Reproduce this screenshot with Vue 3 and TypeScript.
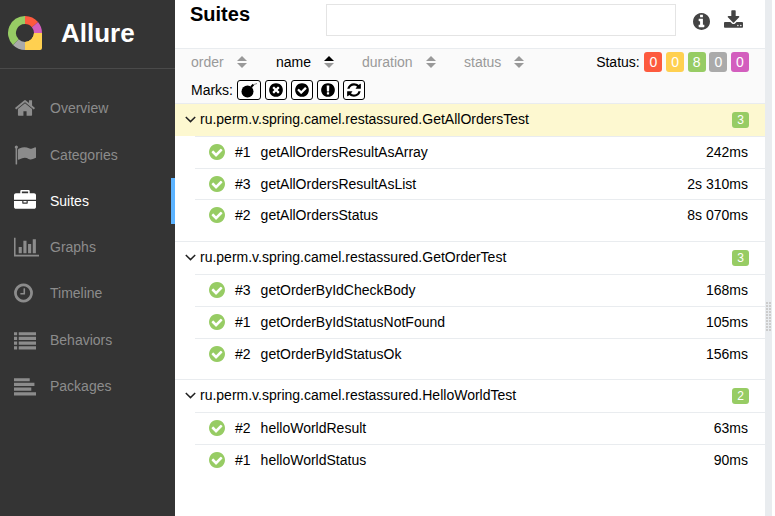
<script setup lang="ts">
interface NavItem {
  label: string
  view: string
  width: number
  d: string
  active?: boolean
}

interface TestRow {
  order: number
  name: string
  time: string
}

interface Group {
  name: string
  count: number
  selected?: boolean
  rows: TestRow[]
}

const check =
  'M1412 734q0-28-18-46l-91-90q-19-19-45-19t-45 19l-408 407-226-226q-19-19-45-19t-45 19l-91 90q-18 18-18 46 0 27 18 45l362 362q19 19 45 19 27 0 46-19l543-543q18-18 18-45zm252 162q0 209-103 385.500t-279.500 279.500-385.500 103-385.500-103-279.500-279.500-103-385.500 103-385.500 279.500-279.500 385.500-103 385.500 103 279.500 279.500 103 385.500z'
const times =
  'M1277 1122q0-26-19-45l-181-181 181-181q19-19 19-45 0-27-19-46l-90-90q-19-19-46-19-26 0-45 19l-181 181-181-181q-19-19-45-19-27 0-46 19l-90 90q-19 19-19 46 0 26 19 45l181 181-181 181q-19 19-19 45 0 27 19 46l90 90q19 19 46 19 26 0 45-19l181-181 181 181q19 19 45 19 27 0 46-19l90-90q19-19 19-46zm387-226q0 209-103 385.500t-279.500 279.500-385.500 103-385.500-103-279.500-279.500-103-385.500 103-385.500 279.500-279.500 385.500-103 385.500 103 279.500 279.500 103 385.500z'
const exclaim =
  'M896 128q209 0 385.500 103t279.500 279.500 103 385.500-103 385.500-279.500 279.500-385.500 103-385.500-103-279.500-279.500-103-385.500 103-385.500 279.500-279.500 385.500-103zm128 1247v-190q0-14-9-23.500t-22-9.500h-192q-13 0-23 10t-10 23v190q0 13 10 23t23 10h192q13 0 22-9.500t9-23.500zm-2-344l18-621q0-12-10-18-10-8-24-8h-220q-14 0-24 8-10 6-10 18l17 621q0 10 10 17.500t24 7.500h185q14 0 23.500-7.500t10.500-17.500z'
const refresh =
  'M1639 1056q0 5-1 7-64 268-268 434.500t-478 166.500q-146 0-282.500-55t-243.500-157l-129 129q-19 19-45 19t-45-19-19-45v-448q0-26 19-45t45-19h448q26 0 45 19t19 45-19 45l-137 137q71 66 161 102t187 36q134 0 250-65t186-179q11-17 53-117 8-23 30-23h192q13 0 22.500 9.500t9.500 22.500zm25-800v448q0 26-19 45t-45 19h-448q-26 0-45-19t-19-45 19-45l138-138q-148-137-349-137-134 0-250 65t-186 179q-11 17-53 117-8 23-30 23h-199q-13 0-22.500-9.500t-9.500-22.500v-7q65-268 270-434.500t480-166.500q146 0 284 55.500t245 156.500l130-129q19-19 45-19t45 19 19 45z'
const info =
  'M1152 1376v-160q0-14-9-23t-23-9h-96v-512q0-14-9-23t-23-9h-320q-14 0-23 9t-9 23v160q0 14 9 23t23 9h96v320h-96q-14 0-23 9t-9 23v160q0 14 9 23t23 9h448q14 0 23-9t9-23zm-128-896v-160q0-14-9-23t-23-9h-192q-14 0-23 9t-9 23v160q0 14 9 23t23 9h192q14 0 23-9t9-23zm640 416q0 209-103 385.500t-279.500 279.500-385.500 103-385.500-103-279.500-279.500-103-385.500 103-385.500 279.500-279.500 385.500-103 385.500 103 279.500 279.500 103 385.500z'
const download =
  'M1344 1344q0-26-19-45t-45-19-45 19-19 45 19 45 45 19 45-19 19-45zm256 0q0-26-19-45t-45-19-45 19-19 45 19 45 45 19 45-19 19-45zm128-224v320q0 40-28 68t-68 28h-1472q-40 0-68-28t-28-68v-320q0-40 28-68t68-28h465l135 136q58 56 136 56t136-56l136-136h464q40 0 68 28t28 68zm-325-569q17 41-14 70l-448 448q-18 19-45 19t-45-19l-448-448q-31-29-14-70 17-39 59-39h256v-448q0-26 19-45t45-19h256q26 0 45 19t19 45v448h256q42 0 59 39z'

const nav: NavItem[] = [
  {
    label: 'Overview',
    view: '0 0 1792 1792',
    width: 22,
    d: 'M1472 992v480q0 26-19 45t-45 19h-384v-384h-256v384h-384q-26 0-45-19t-19-45v-480q0-1 .5-3t.5-3l575-474 575 474q1 2 1 6zm223-69l-62 74q-8 9-21 11h-3q-13 0-21-7l-692-577-692 577q-12 8-24 7-13-2-21-11l-62-74q-8-10-7-23.500t11-21.500l719-599q32-26 76-26t76 26l244 204v-195q0-14 9-23t23-9h192q14 0 23 9t9 23v408l219 182q10 8 11 21.500t-7 23.500z',
  },
  {
    label: 'Categories',
    view: '0 0 1792 1792',
    width: 22,
    d: 'M320 256q0 72-64 110v1266q0 13-9.500 22.500t-22.500 9.500h-64q-13 0-22.500-9.500t-9.500-22.500v-1266q-64-38-64-110 0-53 37.500-90.500t90.500-37.500 90.500 37.500 37.500 90.500zm1472 64v763q0 25-12.500 38.500t-39.500 27.500q-215 116-369 116-61 0-123.500-22t-108.500-48-115.500-48-142.500-22q-192 0-464 146-17 9-33 9-26 0-45-19t-19-45v-742q0-32 31-55 21-14 79-43 236-120 421-120 107 0 200 29t219 88q38 19 88 19 54 0 117.500-21t110-47 88-47 54.500-21q26 0 45 19t19 45z',
  },
  {
    label: 'Suites',
    active: true,
    view: '0 0 1792 1792',
    width: 22,
    d: 'M640 256h512v-128h-512v128zm1152 640v480q0 66-47 113t-113 47h-1472q-66 0-113-47t-47-113v-480h672v160q0 26 19 45t45 19h320q26 0 45-19t19-45v-160h672zm-768 0v128h-256v-128h256zm768-480v384h-1792v-384q0-66 47-113t113-47h352v-160q0-40 28-68t68-28h576q40 0 68 28t28 68v160h352q66 0 113 47t47 113z',
  },
  {
    label: 'Graphs',
    view: '0 0 2048 1792',
    width: 25,
    d: 'M640 896v512h-256v-512h256zm384-512v1024h-256v-1024h256zm1024 1152v128h-2048v-1536h128v1408h1920zm-640-896v768h-256v-768h256zm384-384v1152h-256v-1152h256z',
  },
  {
    label: 'Timeline',
    view: '0 0 1536 1792',
    width: 19,
    d: 'M896 544v448q0 14-9 23t-23 9h-320q-14 0-23-9t-9-23v-64q0-14 9-23t23-9h224v-352q0-14 9-23t23-9h64q14 0 23 9t9 23zm416 352q0-148-73-273t-198-198-273-73-273 73-198 198-73 273 73 273 198 198 273 73 273-73 198-198 73-273zm224 0q0 209-103 385.500t-279.500 279.500-385.500 103-385.500-103-279.500-279.500-103-385.500 103-385.500 279.500-279.500 385.500-103 385.500 103 279.500 279.500 103 385.500z',
  },
  {
    label: 'Behaviors',
    view: '0 0 1792 1792',
    width: 22,
    d: 'M0 256h256v256h-256zM384 256h1408v256h-1408zM0 640h256v256h-256zM384 640h1408v256h-1408zM0 1024h256v256h-256zM384 1024h1408v256h-1408zM0 1408h256v256h-256zM384 1408h1408v256h-1408z',
  },
  {
    label: 'Packages',
    view: '0 0 1792 1792',
    width: 22,
    d: 'M0 256h1280v256h-1280zM0 640h1664v256h-1664zM0 1024h1408v256h-1408zM0 1408h1792v256h-1792z',
  },
]

const sorters = [
  { label: 'order', width: 85, active: false },
  { label: 'name', width: 86, active: true },
  { label: 'duration', width: 102, active: false },
  { label: 'status', width: 0, active: false },
]

const statuses = [
  { value: 0, color: '#fd5a3e' },
  { value: 0, color: '#ffd050' },
  { value: 8, color: '#97cc64' },
  { value: 0, color: '#aaaaaa' },
  { value: 0, color: '#d35ebe' },
]

const marks = [
  { width: 24, d: '' },
  { width: 22, d: times },
  { width: 22, d: check },
  { width: 22, d: exclaim },
  { width: 22, d: refresh },
]

const groups: Group[] = [
  {
    name: 'ru.perm.v.spring.camel.restassured.GetAllOrdersTest',
    count: 3,
    selected: true,
    rows: [
      { order: 1, name: 'getAllOrdersResultAsArray', time: '242ms' },
      { order: 3, name: 'getAllOrdersResultAsList', time: '2s 310ms' },
      { order: 2, name: 'getAllOrdersStatus', time: '8s 070ms' },
    ],
  },
  {
    name: 'ru.perm.v.spring.camel.restassured.GetOrderTest',
    count: 3,
    rows: [
      { order: 3, name: 'getOrderByIdCheckBody', time: '168ms' },
      { order: 1, name: 'getOrderByIdStatusNotFound', time: '105ms' },
      { order: 2, name: 'getOrderByIdStatusOk', time: '156ms' },
    ],
  },
  {
    name: 'ru.perm.v.spring.camel.restassured.HelloWorldTest',
    count: 2,
    rows: [
      { order: 2, name: 'helloWorldResult', time: '63ms' },
      { order: 1, name: 'helloWorldStatus', time: '90ms' },
    ],
  },
]
</script>

<template>
  <div class="app">
    <aside class="side">
      <div class="brand">
        <svg class="logo" width="36" height="36" viewBox="0 0 36 36">
          <path d="M26 17H34V32a2 2 0 0 1-2 2H17V26A9 9 0 0 0 26 17z" fill="#ffd050" />
          <g fill="none" stroke-width="8">
            <path d="M17 4A13 13 0 0 1 26.960 8.640" stroke="#fd5a3e" />
            <path d="M26.960 8.640A13 13 0 0 1 30 17" stroke="#d35ebe" />
            <path d="M30 17A13 13 0 0 1 17 30" stroke="#ffd050" />
            <path d="M17 30A13 13 0 0 1 7.810 26.190" stroke="#aaaaaa" />
            <path d="M7.810 26.190A13 13 0 0 1 17 4" stroke="#97cc64" />
          </g>
        </svg>
        <span class="brand-name">Allure</span>
      </div>
      <nav class="nav">
        <a v-for="item in nav" :key="item.label" class="nav-item" :class="{ active: item.active }">
          <span class="nav-icon">
            <svg :width="item.width" height="22" :viewBox="item.view" fill="currentColor"><path :d="item.d" /></svg>
          </span>
          <span>{{ item.label }}</span>
        </a>
      </nav>
    </aside>

    <main class="main">
      <header class="head">
        <h2 class="title">Suites</h2>
        <input class="search" type="text" />
        <svg class="info" width="17" height="17" viewBox="128 128 1536 1536" fill="#444"><path :d="info" /></svg>
        <svg class="download" width="19" height="18" viewBox="64 0 1664 1536" fill="#444"><path :d="download" /></svg>
      </header>

      <section class="filters">
        <div class="filter-line">
          <span
            v-for="s in sorters"
            :key="s.label"
            class="sorter"
            :class="{ on: s.active }"
            :style="s.width ? { width: s.width + 'px' } : {}"
          >
            {{ s.label }}
            <svg class="carets" width="10" height="12" viewBox="0 0 10 12">
              <path d="M5 0l5 5H0z" :fill="s.active ? '#000' : '#999'" />
              <path d="M0 7h10l-5 5z" fill="#999" />
            </svg>
          </span>
          <span class="status">
            <span class="status-label">Status:</span>
            <b v-for="(st, i) in statuses" :key="i" class="badge" :style="{ background: st.color }">{{ st.value }}</b>
          </span>
        </div>
        <div class="marks">
          Marks:
          <button v-for="(m, i) in marks" :key="i" class="mark" :style="{ width: m.width + 'px' }">
            <svg v-if="m.d" width="16" height="16" viewBox="0 0 1792 1792" fill="#000"><path :d="m.d" /></svg>
            <svg v-else width="18" height="16" viewBox="0 0 18 16">
              <circle cx="7.500" cy="9.500" r="6" fill="#000" />
              <path d="M11 5l2.500-2.500" stroke="#000" stroke-width="2" />
              <path d="M14 2.500l3-1" stroke="#888" stroke-width="1" />
            </svg>
          </button>
        </div>
      </section>

      <section v-for="g in groups" :key="g.name" class="group">
        <div class="group-head" :class="{ selected: g.selected }">
          <svg class="chev" width="11" height="7" viewBox="0 0 11 7">
            <path d="M.8 1l4.700 4.600L10.200 1" fill="none" stroke="#222" stroke-width="1.500" />
          </svg>
          <span class="group-name">{{ g.name }}</span>
          <b class="badge count">{{ g.count }}</b>
        </div>
        <div v-for="r in g.rows" :key="r.name" class="row">
          <svg class="ok" width="16" height="16" viewBox="128 128 1536 1536" fill="#97cc64"><path :d="check" /></svg>
          <span class="num">#{{ r.order }}</span>
          <span class="test">{{ r.name }}</span>
          <span class="time">{{ r.time }}</span>
        </div>
      </section>
    </main>

    <div class="gutter">
      <span class="grip"></span>
    </div>
  </div>
</template>

<style>
html,
body {
  margin: 0;
  background: #fff;
  overflow: hidden;
}
</style>

<style scoped>
.app {
  display: flex;
  width: 775px;
  height: 516px;
  overflow: hidden;
  font: 14px/20px 'Liberation Sans', Arial, sans-serif;
  color: #000;
  background: #fff;
}

.side {
  flex: 0 0 175px;
  background: #343434;
  color: #fff;
}

.brand {
  display: flex;
  align-items: center;
  box-sizing: border-box;
  height: 69px;
  padding: 0 0 2px 8px;
  border-bottom: 1px solid #4a4a4a;
}

.logo {
  margin-top: 1px;
  flex: none;
}

.brand-name {
  margin-left: 17px;
  font-size: 26px;
  font-weight: 700;
}

.nav {
  display: flex;
  flex-direction: column;
  padding-top: 16.33px;
}

.nav-item {
  display: flex;
  align-items: center;
  height: 46.25px;
  box-sizing: border-box;
  color: #8c8c8c;
  border-right: 4px solid transparent;
}

.nav-item.active {
  color: #fff;
  border-right-color: #5cb3ff;
}

.nav-icon {
  display: flex;
  align-items: center;
  flex: none;
  width: 50px;
  padding-left: 14px;
  box-sizing: border-box;
}

.main {
  flex: 0 0 590px;
  min-width: 0;
}

.head {
  display: flex;
  align-items: flex-start;
  height: 48px;
  box-sizing: border-box;
}

.title {
  flex: none;
  width: 136px;
  margin: 2px 0 0 15px;
  font-size: 20px;
  line-height: 24px;
  font-weight: 700;
}

.search {
  flex: none;
  width: 350px;
  height: 32px;
  margin: 4px 0 0;
  padding: 0;
  box-sizing: border-box;
  border: 1px solid #e4e4e4;
  background: #fff;
}

.info {
  margin: 13px 14px 0 17px;
}

.download {
  margin-top: 10px;
}

.filters {
  height: 54.88px;
  box-sizing: border-box;
  padding: 2px 0 0 16px;
  background: #fafafa;
  border-top: 1px solid #e9ecef;
}

.filter-line {
  display: flex;
  align-items: center;
  height: 21px;
}

.sorter {
  display: inline-flex;
  align-items: center;
  color: #999;
  flex: none;
  gap: 13px;
}

.sorter.on {
  color: #000;
}

.status {
  display: flex;
  align-items: center;
  gap: 3.67px;
  margin-left: auto;
  margin-right: 16px;
  color: #000;
}

.status-label {
  margin-right: 1px;
}

.badge {
  display: inline-block;
  min-width: 18px;
  height: 20px;
  line-height: 20px;
  border-radius: 3px;
  color: #fff;
  font-weight: 400;
  text-align: center;
  font-size: 14px;
}

.marks {
  display: flex;
  align-items: center;
  gap: 4px;
  margin-top: 8px;
}

.mark {
  display: flex;
  align-items: center;
  justify-content: center;
  height: 20px;
  padding: 0;
  background: #fff;
  border: 1px solid #000;
  border-radius: 3px;
}

.group {
  margin-bottom: 9.9px;
}

.group-head {
  display: flex;
  align-items: center;
  height: 33.4px;
  box-sizing: border-box;
  padding: 0 16px 2px 10px;
  border-top: 1px solid #e9ecef;
}

.group-head.selected {
  background: #fdf8d0;
}

.chev {
  margin-right: 4px;
}

.group-name {
  flex: 1;
}

.count {
  width: 17px;
  min-width: 17px;
  height: 16px;
  margin-top: 2px;
  line-height: 16px;
  font-size: 12px;
  background: #97cc64;
}

.row {
  display: flex;
  align-items: center;
  height: 31.6px;
  box-sizing: border-box;
  margin-left: 20px;
  padding: 0 17px 0.6px 0;
  border-top: 1px solid #e9ecef;
}

.ok {
  flex: none;
  margin-left: 14px;
  margin-right: 10px;
}

.num {
  width: 25.6px;
}

.test {
  flex: 1;
}

.gutter {
  flex: 0 0 7px;
  height: 516px;
  box-sizing: border-box;
  padding: 302px 0 0 1px;
  background: #e9ecef;
}

.grip {
  display: block;
  width: 5px;
  height: 30px;
  background:
    repeating-linear-gradient(0deg, #e9ecef 0 1px, transparent 1px 3px),
    repeating-linear-gradient(90deg, #ccc 0 2px, #e9ecef 2px 3px);
}
</style>
